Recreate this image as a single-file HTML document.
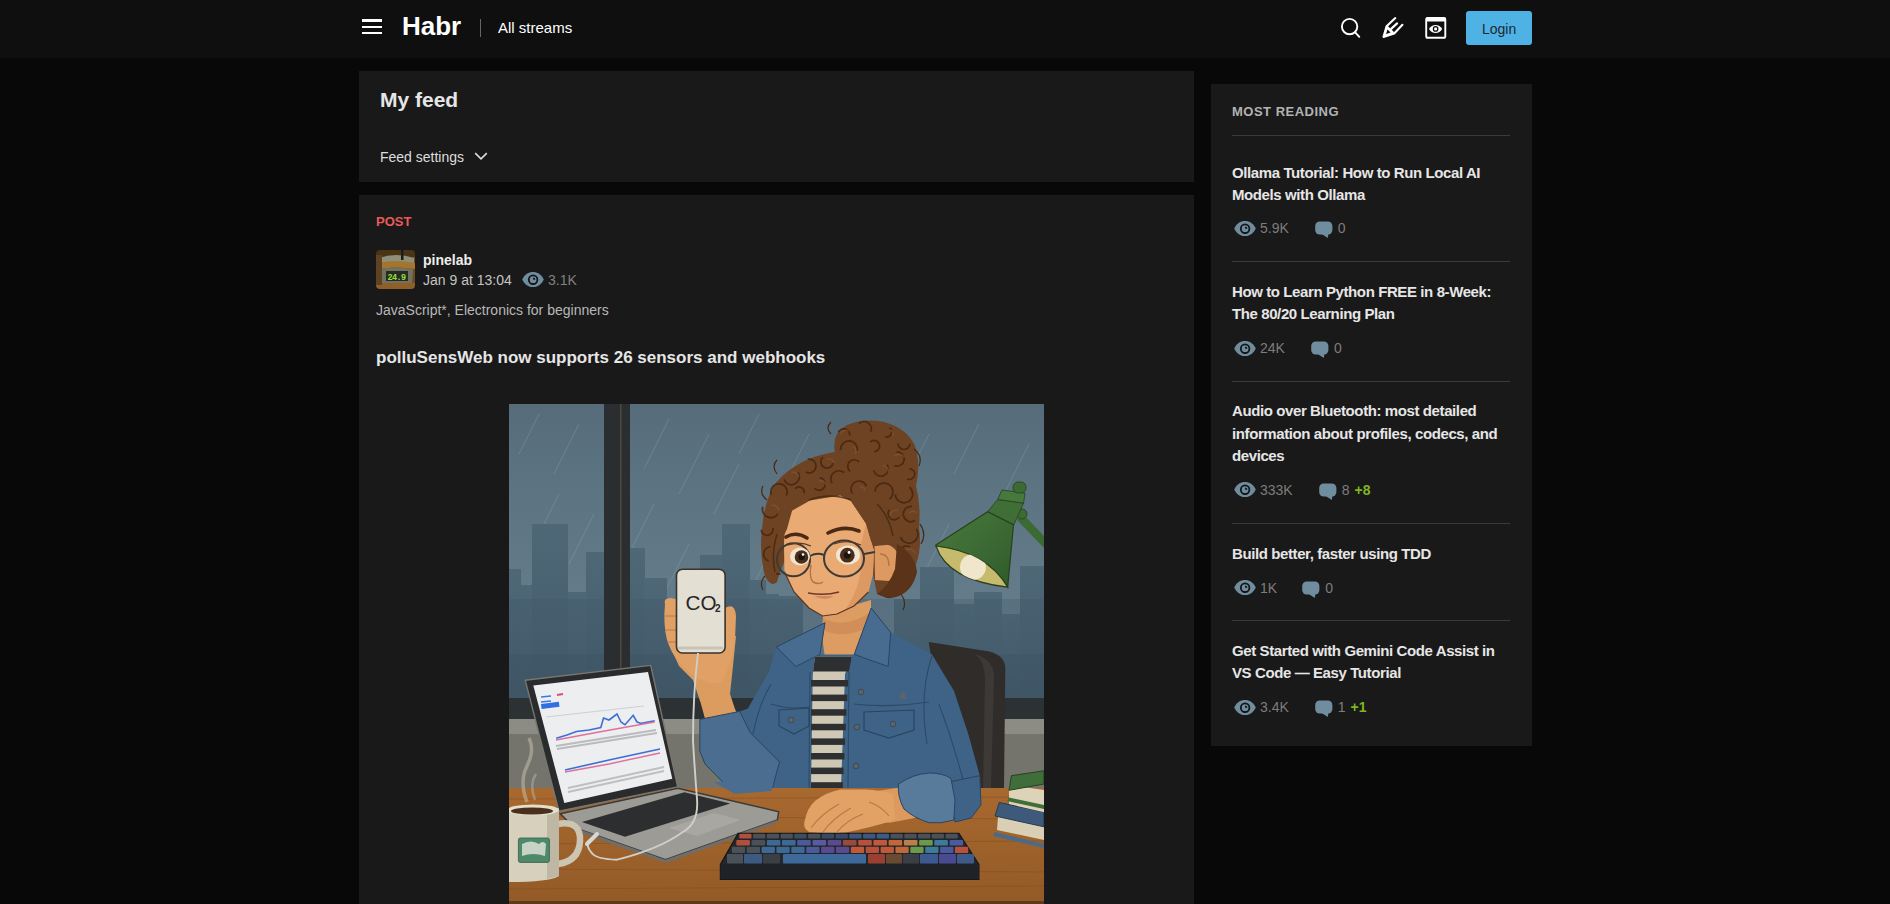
<!DOCTYPE html>
<html><head><meta charset="utf-8">
<style>
*{margin:0;padding:0;box-sizing:border-box}
html,body{width:1890px;height:904px;overflow:hidden;background:#080808;font-family:"Liberation Sans",sans-serif;color:#eee}
.abs{position:absolute}
#hdr{position:absolute;left:0;top:0;width:1890px;height:58px;background:#0f0f0f}
.card{position:absolute;background:#191919}
.t{position:absolute;white-space:nowrap;line-height:1}
.sbt{font-size:15px;font-weight:bold;line-height:22.5px;letter-spacing:-0.4px;color:#e6e6e6;white-space:nowrap}
.sbs{display:flex;align-items:center;height:14px;font-size:14px;line-height:14px;color:#7d7d7d;white-space:nowrap}
</style></head><body>
<div id="hdr">
  <div class="abs" style="left:362px;top:19px;width:20px;height:3px;background:#fff"></div>
  <div class="abs" style="left:362px;top:26px;width:20px;height:2px;background:#fff"></div>
  <div class="abs" style="left:362px;top:32px;width:20px;height:2px;background:#fff"></div>
  <div class="t" style="left:402px;top:13px;font-size:26px;font-weight:bold;color:#fff">Habr</div>
  <div class="abs" style="left:480px;top:19px;width:1px;height:18px;background:#666"></div>
  <div class="t" style="left:498px;top:20px;font-size:15px;color:#fff">All streams</div>

  <svg class="abs" style="left:1330px;top:8px" width="40" height="40" viewBox="1330 8 40 40">
    <circle cx="1349.6" cy="26.6" r="7.7" fill="none" stroke="#fff" stroke-width="1.9"/>
    <path d="M1355.2 32.3 L1359.3 36.8" stroke="#fff" stroke-width="1.9" stroke-linecap="round"/>
  </svg>
  <svg class="abs" style="left:1378px;top:12px" width="30" height="30" viewBox="0 0 30 30">
    <path d="M8.6 14.2 L5.5 24.9 L16.2 21.5 Z" fill="#fff"/>
    <path d="M9.4 17.6 L12.6 20.5 L8.1 21.9 Z" fill="#0f0f0f"/>
    <path d="M17.3 6.1 L8.6 14.2 L5.5 24.9 L16.2 21.5 L24.4 12.8" fill="none" stroke="#fff" stroke-width="2.1" stroke-linecap="round" stroke-linejoin="round"/>
    <path d="M8.8 14.6 L14.8 20.2 M13.4 16.6 L19.1 11.4" fill="none" stroke="#fff" stroke-width="2.1" stroke-linecap="round"/>
  </svg>
  <svg class="abs" style="left:1420px;top:12px" width="32" height="32" viewBox="1420 12 32 32">
    <rect x="1426.2" y="17.9" width="19.1" height="19.9" rx="1.6" fill="none" stroke="#fff" stroke-width="1.9"/>
    <rect x="1426" y="17.5" width="19.6" height="4" fill="#fff"/>
    <path d="M1429 28.9 C1432 23.6 1439.2 23.6 1442.2 28.9 C1439.2 34.2 1432 34.2 1429 28.9Z" fill="#fff"/>
    <circle cx="1435.6" cy="28.9" r="2.2" fill="none" stroke="#0f0f0f" stroke-width="1.3"/>
  </svg>
  <div class="abs" style="left:1466px;top:11px;width:66px;height:34px;background:#4fb2e5;border-radius:3px"></div>
  <div class="t" style="left:1482px;top:22px;font-size:14px;color:#1d2830">Login</div>
</div>

<div class="card" style="left:359px;top:71px;width:835px;height:111px"></div>
<div class="t" style="left:380px;top:89px;font-size:21px;font-weight:bold;color:#e6e6e6">My feed</div>
<div class="t" style="left:380px;top:150px;font-size:14px;color:#ddd">Feed settings</div>

<svg class="abs" style="left:474px;top:151px" width="14" height="10" viewBox="0 0 14 10"><path d="M1.2 2.2 L7 7.8 L12.8 2.2" fill="none" stroke="#ddd" stroke-width="1.6"/></svg>
<div class="card" style="left:359px;top:195px;width:835px;height:720px"></div>
<div class="t" style="left:376px;top:215px;font-size:13px;font-weight:bold;color:#e85a5a">POST</div>
<svg class="abs" style="left:376px;top:250px" width="39" height="39" viewBox="0 0 39 39"><defs><clipPath id="avc"><rect width="39" height="39" rx="4"/></clipPath><filter id="avb" x="-10%" y="-10%" width="120%" height="120%"><feGaussianBlur stdDeviation="0.7"/></filter></defs><g clip-path="url(#avc)"><g filter="url(#avb)">
<rect x="-2" y="-2" width="43" height="43" fill="#6e4c24"/>
<rect x="-2" y="-2" width="43" height="9" fill="#4a3519"/>
<path d="M3 8 Q20 2 38 8 L38 14 Q20 10 3 14Z" fill="#8d8f78"/>
<path d="M2 13 Q20 9 39 13 L39 19 Q20 16 2 19Z" fill="#a4742e"/>
<path d="M3 19 Q20 16 37 19 L36 34 Q20 38 4 34Z" fill="#6f725e"/>
<rect x="10" y="21" width="22" height="10" fill="#2c2c20"/>
<rect x="0" y="33" width="39" height="8" fill="#8f5e2a"/>
<rect x="0" y="5" width="6" height="30" fill="#5e4220"/>
<rect x="25" y="0" width="2.5" height="10" fill="#1c1c1c"/>
</g>
<text x="11.5" y="29.5" font-family="Liberation Mono" font-size="8.5" font-weight="bold" fill="#8fe03c" letter-spacing="-0.6">24.9</text>
</g></svg>
<div class="t" style="left:423px;top:253px;font-size:14px;font-weight:bold;color:#eee">pinelab</div>
<div class="t" style="left:423px;top:273px;font-size:14px;color:#c4c4c4">Jan 9 at 13:04</div>
<svg class="abs" style="left:521.5px;top:272px" width="22" height="15" viewBox="0 0 22 15"><path d="M0.2 7.6 C4.5 -2.6 17.5 -2.6 21.8 7.6 C17.5 17.8 4.5 17.8 0.2 7.6Z" fill="#6f8d9e"/><circle cx="11.1" cy="7.7" r="4.3" fill="none" stroke="#141414" stroke-width="1.8"/><path d="M11.1 7.7 L11.1 5.4 A2.3 2.3 0 0 1 13.4 7.7Z" fill="#141414"/></svg>
<div class="t" style="left:548px;top:273px;font-size:14px;color:#808080">3.1K</div>
<div class="t" style="left:376px;top:303px;font-size:14px;color:#b8b8b8">JavaScript*, Electronics for beginners</div>
<div class="t" style="left:376px;top:349px;font-size:17px;font-weight:bold;color:#e6e6e6">polluSensWeb now supports 26 sensors and webhooks</div>

<svg class="abs" style="left:509px;top:404px" width="535" height="500" viewBox="0 0 535 500">
<defs>
<linearGradient id="sky" x1="0" y1="0" x2="0" y2="1"><stop offset="0" stop-color="#566c7a"/><stop offset="0.5" stop-color="#617987"/><stop offset="1" stop-color="#6b8391"/></linearGradient>
<linearGradient id="desk" x1="0" y1="0" x2="0" y2="1"><stop offset="0" stop-color="#a8692f"/><stop offset="1" stop-color="#935a27"/></linearGradient>
<linearGradient id="bld" x1="0" y1="0" x2="0" y2="1"><stop offset="0" stop-color="#4f6878"/><stop offset="1" stop-color="#425a6a"/></linearGradient>
<linearGradient id="shade" x1="0" y1="0" x2="1" y2="1"><stop offset="0" stop-color="#4a7b3e"/><stop offset="1" stop-color="#2f5a2a"/></linearGradient>
</defs>
<rect width="535" height="300" fill="url(#sky)"/>
<g stroke="#8ea5b2" stroke-width="0.9" opacity="0.4">
<path d="M30 10 L10 50 M70 20 L45 70 M50 90 L25 140 M85 110 L60 160 M20 180 L5 210 M160 15 L135 65 M200 30 L170 90 M145 100 L120 150 M230 60 L205 110 M180 140 L155 190 M250 10 L230 50 M300 30 L275 80 M470 20 L445 70 M520 40 L495 90 M440 120 L415 170 M500 140 L480 180 M420 30 L400 70 M260 150 L240 190 M60 230 L40 270 M150 220 L130 260 M190 210 L170 250 M455 200 L435 240 M520 200 L500 240"/>
</g>
<g fill="url(#bld)">
<rect x="0" y="165" width="12" height="135"/>
<rect x="12" y="181" width="12" height="119"/>
<rect x="23" y="120" width="36" height="180"/>
<rect x="59" y="188" width="18" height="112"/>
<rect x="77" y="148" width="18" height="152"/>
<rect x="121" y="144" width="15" height="156"/>
<rect x="135" y="174" width="23" height="126"/>
<rect x="158" y="195" width="33" height="105"/>
<rect x="191" y="151" width="22" height="149"/>
<rect x="213" y="120" width="28" height="180"/>
<rect x="240" y="176" width="17" height="124"/>
<rect x="257" y="190" width="13" height="110"/>
<rect x="270" y="192" width="24" height="108"/>
<rect x="385" y="195" width="27" height="105"/>
<rect x="411" y="163" width="34" height="137"/>
<rect x="444" y="200" width="21" height="100"/>
<rect x="465" y="188" width="28" height="112"/>
<rect x="493" y="210" width="18" height="90"/>
<rect x="511" y="162" width="24" height="138"/>
</g>
<rect x="0" y="195" width="535" height="105" fill="#3f5666" opacity="0.3"/><rect x="0" y="250" width="535" height="50" fill="#3a5060" opacity="0.3"/>
<!-- window frame -->
<rect x="95" y="0" width="26" height="300" fill="#2b2e30"/>
<rect x="111" y="0" width="1.5" height="300" fill="#4d4838"/>
<rect x="0" y="294" width="535" height="21" fill="#2c3134"/>
<rect x="0" y="315" width="535" height="69" fill="#74736c"/>
<rect x="0" y="315" width="535" height="15" fill="#8c8b84"/>
<!-- chair -->
<path d="M419.7 238 L480.5 247.6 Q497 252 496.3 266 L495 384 L440 384 L430 300 Z" fill="#2f2c2a"/>
<path d="M466 250 Q486 256 485 275 L482 384 L474 384 L476 275 Q476 258 466 250Z" fill="#3c3936"/>
<!-- hair back mass -->
<path d="M256 172 Q250 150 253 125 Q255 98 266 80 Q280 62 305 53 Q318 49 326 48 Q322 30 338 21 Q355 14 375 18 Q398 24 406 42 Q412 60 407 82 Q412 100 410 124 Q413 145 407 160 Q400 180 392 188 Q380 196 368 190 L360 150 L300 140 L280 150 Q272 162 268 178 Q262 184 256 172Z" fill="#6d4324"/>
<path d="M329.3 28.4 A6.0 6.0 0 0 1 340.7 31.6 M349.8 19.7 A7.4 7.4 0 0 1 361.9 27.6 M380.6 23.7 A5.1 5.1 0 0 1 376.1 32.7 M400.9 39.8 A5.9 5.9 0 1 1 389.1 39.4 M331.7 46.2 A8.3 8.3 0 1 1 348.1 46.8 M361.3 37.8 A5.6 5.6 0 1 1 365.2 47.6 M387.6 47.9 A7.1 7.1 0 1 1 385.5 61.6 M400.3 64.8 A5.3 5.3 0 1 1 398.2 74.9 M324.1 59.2 A6.2 6.2 0 1 1 314.0 53.2 M298.7 55.2 A6.9 6.9 0 1 1 296.7 68.0 M288.9 68.3 A7.9 7.9 0 1 1 275.0 75.5 M262.3 90.8 A8.2 8.2 0 1 1 277.4 91.5 M269.0 109.9 A8.5 8.5 0 0 1 253.8 102.7 M263.7 123.7 A5.9 5.9 0 1 1 252.2 125.8 M259.6 157.1 A7.5 7.5 0 1 1 265.6 143.4 M341.1 67.3 A6.5 6.5 0 1 1 350.2 58.1 M378.0 60.8 A7.3 7.3 0 1 1 364.8 66.3 M400.4 83.2 A8.7 8.7 0 1 1 386.3 90.4 M406.0 116.6 A7.7 7.7 0 1 1 403.0 102.4 M407.3 125.0 A8.9 8.9 0 1 1 391.6 132.9 M399.9 157.6 A7.9 7.9 0 1 1 401.0 142.7 M388.4 177.1 A7.3 7.3 0 0 1 388.4 162.9 M388.4 184.5 A8.4 8.4 0 0 1 372.5 188.8 M323.1 79.4 A8.2 8.2 0 0 1 335.3 68.7 M310.7 73.9 A6.2 6.2 0 1 1 305.5 84.2 M286.1 84.6 A5.2 5.2 0 0 1 295.0 89.3 M346.2 91.9 A7.9 7.9 0 1 1 357.4 82.3 M366.1 87.7 A8.9 8.9 0 1 1 380.5 95.0 M390.5 112.9 A6.2 6.2 0 1 1 380.6 105.5 M271.7 169.8 A5.1 5.1 0 1 1 268.6 160.1" fill="none" stroke="#46250e" stroke-width="1.7" opacity="0.85"/>
<path d="M331.5 30.1 A5.8 5.8 0 0 1 339.8 26.9 M381.0 26.0 A4.1 4.1 0 0 1 383.8 31.7 M344.1 42.5 A4.9 4.9 0 0 1 346.0 49.8 M385.3 52.2 A6.7 6.7 0 0 1 395.5 53.2 M317.5 55.2 A5.4 5.4 0 0 1 325.1 58.4 M282.1 68.4 A5.9 5.9 0 0 1 289.9 73.1 M262.5 101.5 A5.7 5.7 0 0 1 269.7 106.4 M260.7 146.0 A6.8 6.8 0 0 1 270.4 149.8 M373.7 61.7 A5.3 5.3 0 0 1 379.3 67.6 M400.2 109.2 A4.7 4.7 0 0 1 407.4 108.7 M396.8 145.8 A6.9 6.9 0 0 1 406.6 149.9 M376.4 186.9 A5.6 5.6 0 0 1 383.1 181.5 M310.2 77.1 A5.2 5.2 0 0 1 317.2 81.1 M350.9 83.1 A4.1 4.1 0 0 1 356.0 86.6 M381.2 111.3 A5.9 5.9 0 0 1 388.7 106.4" fill="none" stroke="#8f5a32" stroke-width="1.3" opacity="0.6"/>
<path d="M322 30 Q316 24 322 18 M258 96 Q250 90 254 82 M405 45 Q414 52 410 62 M411 120 Q418 130 412 140 M256 172 Q250 178 254 186 M392 190 Q398 198 394 206 M268 70 Q262 62 268 56" fill="none" stroke="#4a2810" stroke-width="1.2"/>
<!-- neck -->
<path d="M314 210 L362 196 L362 226 L347 254 L316 254 L313 232 Z" fill="#dc9c62"/>
<path d="M314 214 Q335 226 362 208 L362 222 Q335 236 314 226Z" fill="#c98652" opacity="0.6"/>
<!-- jacket body -->
<path d="M316 218.7 L292 232 L267.3 243 L259.9 267.6 L238.7 304.8 L230.7 307.4 L190.9 315.4 L190.9 347.3 L225.4 389.8 L262.6 387.1 L262 384 L419.7 384 L419.7 391 L424.5 408.2 L419.7 420.4 L456.2 418 L472 400.9 L470.8 371.7 L459.5 330.7 L445 287 L423 250.4 L381.7 228.5 L362.2 204 L345.2 250.4 L311 250.4 Z" fill="#3f6386"/>
<g fill="none" stroke="#2a4560" stroke-width="1.1" opacity="0.85">
<path d="M262 300 Q280 306 300 303 M345 300 Q380 304 420 298 M301 268 L300 384 M340 268 L339 384 M430 300 Q445 340 455 380 M241 330 Q255 360 262 387 M262 280 Q250 300 244 330 M423 252 Q410 290 418 340"/>
</g>
<!-- collar -->
<path d="M316 218.7 L267.3 243 L286.8 262.5 L311 250.4 Z" fill="#476c90" stroke="#2a4560" stroke-width="1"/>
<path d="M362.2 204 L381.7 228.5 L379.2 262.5 L345.2 250.4 Z" fill="#476c90" stroke="#2a4560" stroke-width="1"/>
<!-- pockets -->
<path d="M270 306 L300 304 L300 322 L285 330 L270 322Z" fill="none" stroke="#2a4560" stroke-width="1.2"/>
<path d="M355 308 L405 306 L405 326 L380 334 L355 326Z" fill="none" stroke="#2a4560" stroke-width="1.2"/>
<g fill="#5d6468" stroke="#2a3a48" stroke-width="0.6"><circle cx="282" cy="316" r="2.8"/><circle cx="384" cy="320" r="2.8"/><circle cx="352" cy="288" r="2.8"/><circle cx="348" cy="323" r="2.8"/><circle cx="347" cy="362" r="2.8"/></g>
<path d="M390 295 L394 286 L398 295Z" fill="#5d6468"/>
<!-- shirt -->
<path d="M306 252.8 L342.7 252.8 L336 270 L332 384 L302 384 L303.8 270 Z" fill="#cfc8b5"/>
<g fill="#2e2f31">
<path d="M306 252.8 L342.7 252.8 L340 267.4 L304 267.4Z"/>
<rect x="302" y="276" width="37.0" height="6.5"/>
<rect x="302" y="290.6" width="36.3" height="6.5"/>
<rect x="302" y="305.2" width="35.5" height="6.5"/>
<rect x="302" y="319.8" width="34.8" height="6.5"/>
<rect x="302" y="334.4" width="34.1" height="6.5"/>
<rect x="302" y="349" width="33.4" height="6.5"/>
<rect x="302" y="363.6" width="32.6" height="6.5"/>
<rect x="302" y="378.2" width="31.9" height="5.8"/>
</g>
<!-- raised forearm -->
<path d="M160 240 L227 232 L224 262 L221 290 L226 305 L232 318 L201.5 335 L192 300 L184 276 L170 262 Z" fill="#dc9b5f"/>
<!-- sleeve cuff left -->
<path d="M190.9 315.4 L230.7 307.4 L241.3 328.7 L270.5 357.9 L262.6 387.1 L225.4 389.8 L196 360 L190.9 347.3 Z" fill="#4b6e90" stroke="#2a4560" stroke-width="1"/>
<!-- hand holding device -->
<path d="M156 200 Q154 194 162 194 L170 196 L170 250 L216 250 L216 204 Q226 198 227 212 L226 236 Q222 262 213 278 Q200 282 185 272 Q165 258 158 236 Q154 220 156 200Z" fill="#e0a066"/>
<g stroke="#a86a3a" stroke-width="1" fill="none" opacity="0.7"><path d="M156 212 L168 212 M156 226 L168 226 M158 238 L168 238"/></g>
<!-- device -->
<rect x="167.5" y="165.3" width="48.6" height="83.7" rx="6" fill="#e3dfd3" stroke="#3a332a" stroke-width="1.6"/>
<path d="M169 244 L214 244" stroke="#c9c4b6" stroke-width="3"/>
<text x="176.5" y="205.5" font-family="Liberation Sans" font-size="20" fill="#262626" textLength="31" lengthAdjust="spacingAndGlyphs">CO</text>
<text x="206" y="208" font-family="Liberation Sans" font-size="10" font-weight="bold" fill="#262626">2</text>
<!-- face -->
<path d="M276 120 L283 106.7 L301 96.5 L331.4 91.4 L341.6 96.5 L357 119.4 L362 137 L365 146.5 L364 170 L359.4 188 L345 202 L328 210 L313.6 212 L300 204 L285 188 L275.4 167.8 L275 140 Z" fill="#eaaa74"/>
<path d="M357 119.4 L362 137 L365 146.5 L364 170 L359.4 188 L345 202 L335 207 Q356 180 352 140Z" fill="#d8935e" opacity="0.75"/>
<path d="M275.4 167.8 L285 188 L300 204 L313.6 212 L328 210 L345 202 L359.4 188" fill="none" stroke="#5a3520" stroke-width="1.2"/>
<!-- ear -->
<path d="M365.5 142 Q380 136 388 148 Q392 165 380 177 L366 176 Z" fill="#dc9a62"/>
<path d="M371 150 Q380 150 380 162" stroke="#b97444" stroke-width="1.5" fill="none"/>
<!-- hair front details -->
<path d="M362 137 L357 119.4 L341.6 96.5 L331.4 91.4 Q350 86 368 96 Q382 112 388 140 L366 142 Z" fill="#6d4324"/>
<path d="M283 106.7 Q266 118 262 140 Q258 160 262 176 Q270 170 270 155 Q272 135 278 125 Z" fill="#6d4324"/>
<path d="M388 140 Q406 150 408 168 Q404 186 390 192 Q380 196 368 190 Q380 182 386 165 Z" fill="#5a3318"/>
<path d="M300 96 Q320 88 342 96 M368 100 Q380 112 384 132 M268 130 Q262 150 266 168" fill="none" stroke="#46250e" stroke-width="1.5" opacity="0.8"/>
<!-- glasses -->
<g fill="none" stroke="#3d3a36" stroke-width="2">
<ellipse cx="284.5" cy="155.8" rx="16.5" ry="16.5"/>
<ellipse cx="335" cy="154.5" rx="20" ry="18"/>
<path d="M301 152 Q308 148 315 151 M355 150 L366 148"/>
</g>
<!-- eyes -->
<ellipse cx="291" cy="152.5" rx="10" ry="9" fill="#f1e6d2"/>
<ellipse cx="339" cy="151" rx="12" ry="9.5" fill="#f1e6d2"/>
<circle cx="292.5" cy="153" r="6.8" fill="#4a2e1c"/>
<circle cx="338.3" cy="151.2" r="7.4" fill="#4a2e1c"/>
<circle cx="292.5" cy="153" r="3.2" fill="#1e130c"/>
<circle cx="338.3" cy="151.2" r="3.4" fill="#1e130c"/>
<circle cx="294" cy="150.5" r="1.3" fill="#fff"/><circle cx="340" cy="148.5" r="1.4" fill="#fff"/>
<path d="M279 141 Q291 137 302 142 M325 140 Q339 135 352 141" stroke="#5a3a26" stroke-width="1.2" fill="none"/>
<path d="M277 133 Q287 127 298 134 M319 129 Q335 121 350 127" stroke="#4a2a14" stroke-width="3.6" fill="none" stroke-linecap="round"/>
<path d="M302 161 Q300 174 304 178 Q310 181 314 178" stroke="#b87444" stroke-width="1.4" fill="none"/>
<path d="M299 189 Q316 192 330 188" stroke="#6e3a28" stroke-width="1.6" fill="none"/>
<path d="M305 192 Q316 198 325 192" fill="#c97a5a" opacity="0.7"/>
<!-- lamp -->
<path d="M512 108 L535 132 L535 144 L508 116Z" fill="#3b6a33"/>
<circle cx="513" cy="110" r="5" fill="#3b6a33" stroke="#28401f" stroke-width="0.8"/>
<path d="M478.6 107.7 L488.7 95.5 L514.6 99.1 L504.5 121.4 Z" fill="#3f6f36" stroke="#28401f" stroke-width="0.8"/>
<path d="M493 86 L516 89 L514.6 99.1 L488.7 95.5 Z" fill="#46793b" stroke="#28401f" stroke-width="0.8"/>
<rect x="504" y="78" width="13" height="11" rx="5" fill="#3b6a33" stroke="#28401f" stroke-width="0.8"/>
<defs><clipPath id="lampc"><path d="M427 142 Q438 176 498.7 183.2 Q478 148 427 142Z"/></clipPath></defs>
<path d="M426.8 141 L478.6 107.7 L504.5 120.7 L498.7 183.2 Q478 148 427 142Z" fill="url(#shade)" stroke="#28401f" stroke-width="1.2"/>
<path d="M427 142 Q438 176 498.7 183.2 Q478 148 427 142Z" fill="#c6ba6c" stroke="#28401f" stroke-width="1.2"/>
<g clip-path="url(#lampc)"><circle cx="464" cy="163" r="13" fill="#efe6cc"/></g>
<!-- desk -->
<rect x="0" y="384" width="535" height="116" fill="url(#desk)"/>
<g stroke="#7e4a1f" stroke-width="1" opacity="0.45"><path d="M0 395 L535 393 M0 412 L535 415 M0 440 L535 437 M0 465 L535 468 M0 485 L535 482"/></g>
<rect x="0" y="497" width="535" height="3" fill="#5e391a"/>
<!-- sleeves below desk line -->
<path d="M430 380 L470.8 371.7 L472 400.9 L462 414 L446 418 L440 384Z" fill="#3f6386" stroke="#2a4560" stroke-width="1"/>
<path d="M205 378 L225.4 389.8 L262.6 387.1 L264 378Z" fill="#4b6e90"/>
<!-- laptop base -->
<path d="M51.3 409.8 L168.7 384.2 L269.7 407.7 L268.3 416 L156.5 455.7 L64.8 423.3 Z" fill="#9c9b96" stroke="#3a3a38" stroke-width="1.4"/>
<path d="M64.8 423.3 L156.5 455.7 L268.3 416 L268 419 L157 459 L63 426Z" fill="#6f6e6a"/>
<path d="M72.9 418 L175.4 388.3 L221.3 399.4 L116 432.8 Z" fill="#2d2e30"/>
<path d="M160 424 L205 409 L232 416 L188 432Z" fill="#a8a7a2"/>
<!-- laptop screen -->
<path d="M16.2 276.2 L141.7 261.4 L168.7 382.9 L49.9 407.1 Z" fill="#2a2b2d" stroke="#77766f" stroke-width="1.4" stroke-linejoin="round"/>
<path d="M24.3 281.6 L139 268.1 L163.3 374.8 L55.3 399 Z" fill="#eceef0"/>
<path d="M32 293 L42 292 M32 298 L42 297" stroke="#3a7ae0" stroke-width="1.5"/>
<path d="M48 291 L54 290" stroke="#e04a80" stroke-width="2"/>
<rect x="32" y="300" width="18" height="5" fill="#2f6fe0" transform="rotate(-7 32 300)"/>
<path d="M37 313 L135 302" stroke="#c8c8c8" stroke-width="0.8"/>
<path d="M47.2 334.3 L58 331 L67.5 327.5 L80 326 L91.8 323.5 L94.5 314 L100 316 L108 310 L112 318 L116 320.8 L124.2 311.3 L128 318 L132.3 319.4 L145.7 316.7" stroke="#3c6fd6" stroke-width="1.6" fill="none"/>
<path d="M47 336 L90 328 L145.7 318" stroke="#e0709a" stroke-width="1.3" fill="none"/>
<path d="M47 342 L147 326 M48 345 L148 329" stroke="#9a9a9a" stroke-width="2" opacity="0.6"/>
<path d="M56 366 L100 356 L151 345" stroke="#3c6fd6" stroke-width="1.6" fill="none"/>
<path d="M56 368 L100 360 L151 349" stroke="#e0709a" stroke-width="1.3" fill="none"/>
<path d="M59 388 L155 367 M59 384 L155 363" stroke="#9a9a9a" stroke-width="1.8" opacity="0.55"/>
<!-- cable -->
<path d="M189 249 Q184 290 184 337 Q186 370 188 395 Q190 420 172.7 428.7 Q150 445 108 455.7 Q88 455 83.7 450 Q76 442 80 436" stroke="#cfcfc8" stroke-width="1.9" fill="none"/>
<path d="M78 440 L88 430" stroke="#d8d8d2" stroke-width="4" stroke-linecap="round"/>
<!-- mug -->
<path d="M49 420 Q72 416 71 437 Q70 457 49 460" stroke="#cbc5b1" stroke-width="6.5" fill="none"/>
<path d="M0 404 L50 404 L50 472 Q40 478 0 478 Z" fill="#d6d0bc"/>
<path d="M38 404 L50 404 L50 472 L38 475Z" fill="#bdb7a3"/>
<ellipse cx="24" cy="406" rx="26" ry="5.5" fill="#e4dfcc"/>
<ellipse cx="23" cy="407" rx="21" ry="3.6" fill="#4a2f1e"/>
<rect x="9.4" y="434" width="31" height="24.4" rx="2" fill="#4d8a6c" stroke="#3a5a48" stroke-width="0.8"/>
<path d="M13 440 Q22 435 30 440 Q34 436 37 440 L36 452 Q24 448 13 452 Z" fill="#c8d3c6"/>
<path d="M18 398 Q10 378 18 362 Q26 346 20 334" stroke="#c9c3b2" stroke-width="3.5" fill="none" opacity="0.5"/>
<path d="M26 396 Q20 380 27 370" stroke="#c9c3b2" stroke-width="2.5" fill="none" opacity="0.4"/>
<!-- right forearm -->
<path d="M348 390 L378 385.5 L395 382.8 L422.7 393.8 L424 410.4 L381 418.7 L348 416 Z" fill="#dc9a5e"/>
<!-- right hand -->
<path d="M295.4 418 Q298 404 306.5 396.6 Q318 388 331.4 385.5 L356.3 385.5 Q372 386 384 390 L386 416 Q360 424 337 428.4 Q316 430 300 428 Q294 424 295.4 418Z" fill="#e2a266"/>
<g stroke="#a86a3a" stroke-width="1.1" fill="none" opacity="0.75"><path d="M302 424 Q312 410 330 400 M314 428 Q324 414 342 404 M328 428 Q338 416 354 410 M360 398 Q372 402 380 412"/></g>
<!-- sleeve cuff right -->
<path d="M389.5 380 Q404 370 420 369 Q434 369 442 374.5 L446 396 L444.8 416 Q432 420 420 418.7 Q405 414 395 405 Q388 392 389.5 380Z" fill="#587b9b" stroke="#2a4560" stroke-width="1"/>
<!-- keyboard -->
<path d="M229.1 429.3 L449.9 429.3 L469.9 460.4 L469.9 475.3 L211.4 475.3 L211.4 460.4 Z" fill="#23272b" stroke="#14171a" stroke-width="1.2"/>
<path d="M211.4 460.4 L469.9 460.4 L469.9 475.3 L211.4 475.3 Z" fill="#1f2327"/>
<g>
<rect x="230.3" y="429.8" width="12.2" height="4.8" rx="1" fill="#b0503c"/>
<rect x="244.1" y="429.8" width="12.2" height="4.8" rx="1" fill="#4a5158"/>
<rect x="257.8" y="429.8" width="12.2" height="4.8" rx="1" fill="#4a5158"/>
<rect x="271.6" y="429.8" width="12.2" height="4.8" rx="1" fill="#4a5158"/>
<rect x="285.3" y="429.8" width="12.2" height="4.8" rx="1" fill="#3c4e60"/>
<rect x="299.1" y="429.8" width="12.2" height="4.8" rx="1" fill="#4a5158"/>
<rect x="312.8" y="429.8" width="12.2" height="4.8" rx="1" fill="#3a4a66"/>
<rect x="326.6" y="429.8" width="12.2" height="4.8" rx="1" fill="#3a4a66"/>
<rect x="340.3" y="429.8" width="12.2" height="4.8" rx="1" fill="#3e5680"/>
<rect x="354.1" y="429.8" width="12.2" height="4.8" rx="1" fill="#3e5680"/>
<rect x="367.8" y="429.8" width="12.2" height="4.8" rx="1" fill="#3e5a88"/>
<rect x="381.6" y="429.8" width="12.2" height="4.8" rx="1" fill="#4a5158"/>
<rect x="395.3" y="429.8" width="12.2" height="4.8" rx="1" fill="#4a5158"/>
<rect x="409.1" y="429.8" width="12.2" height="4.8" rx="1" fill="#4a5158"/>
<rect x="422.8" y="429.8" width="12.2" height="4.8" rx="1" fill="#4a5158"/>
<rect x="436.6" y="429.8" width="12.2" height="4.8" rx="1" fill="#4a5158"/>
<rect x="227.3" y="436.0" width="13.6" height="5.6" rx="1" fill="#b0503c"/>
<rect x="242.5" y="436.0" width="13.6" height="5.6" rx="1" fill="#4a5158"/>
<rect x="257.8" y="436.0" width="13.6" height="5.6" rx="1" fill="#3d6a94"/>
<rect x="273.0" y="436.0" width="13.6" height="5.6" rx="1" fill="#3d6a94"/>
<rect x="288.2" y="436.0" width="13.6" height="5.6" rx="1" fill="#4a5a9a"/>
<rect x="303.5" y="436.0" width="13.6" height="5.6" rx="1" fill="#5a5aa0"/>
<rect x="318.7" y="436.0" width="13.6" height="5.6" rx="1" fill="#5a4a90"/>
<rect x="333.9" y="436.0" width="13.6" height="5.6" rx="1" fill="#9a4a3a"/>
<rect x="349.2" y="436.0" width="13.6" height="5.6" rx="1" fill="#b8503c"/>
<rect x="364.4" y="436.0" width="13.6" height="5.6" rx="1" fill="#c0583a"/>
<rect x="379.6" y="436.0" width="13.6" height="5.6" rx="1" fill="#c0683a"/>
<rect x="394.9" y="436.0" width="13.6" height="5.6" rx="1" fill="#b8804a"/>
<rect x="410.1" y="436.0" width="13.6" height="5.6" rx="1" fill="#6a9a4a"/>
<rect x="425.3" y="436.0" width="13.6" height="5.6" rx="1" fill="#3e7a9a"/>
<rect x="440.6" y="436.0" width="13.6" height="5.6" rx="1" fill="#4a5aa0"/>
<rect x="222.8" y="442.7" width="13.3" height="6.4" rx="1" fill="#4a5158"/>
<rect x="237.7" y="442.7" width="13.3" height="6.4" rx="1" fill="#4a5158"/>
<rect x="252.6" y="442.7" width="13.3" height="6.4" rx="1" fill="#3d6a94"/>
<rect x="267.4" y="442.7" width="13.3" height="6.4" rx="1" fill="#3d6a94"/>
<rect x="282.3" y="442.7" width="13.3" height="6.4" rx="1" fill="#3d6a94"/>
<rect x="297.2" y="442.7" width="13.3" height="6.4" rx="1" fill="#4a5a9a"/>
<rect x="312.1" y="442.7" width="13.3" height="6.4" rx="1" fill="#5a4a90"/>
<rect x="326.9" y="442.7" width="13.3" height="6.4" rx="1" fill="#5a4a90"/>
<rect x="341.8" y="442.7" width="13.3" height="6.4" rx="1" fill="#c0583a"/>
<rect x="356.7" y="442.7" width="13.3" height="6.4" rx="1" fill="#b8503c"/>
<rect x="371.6" y="442.7" width="13.3" height="6.4" rx="1" fill="#c0583a"/>
<rect x="386.4" y="442.7" width="13.3" height="6.4" rx="1" fill="#c0683a"/>
<rect x="401.3" y="442.7" width="13.3" height="6.4" rx="1" fill="#6a9a4a"/>
<rect x="416.2" y="442.7" width="13.3" height="6.4" rx="1" fill="#3e7a9a"/>
<rect x="431.1" y="442.7" width="13.3" height="6.4" rx="1" fill="#4a5aa0"/>
<rect x="445.9" y="442.7" width="13.3" height="6.4" rx="1" fill="#b8503c"/>
<rect x="218" y="450" width="16" height="9.5" rx="1" fill="#4a5158"/>
<rect x="235" y="450" width="18" height="9.5" rx="1" fill="#3d5a80"/>
<rect x="254" y="450" width="17" height="9.5" rx="1" fill="#3a3f45"/>
<rect x="274" y="450" width="83" height="9.5" rx="1" fill="#3d6a9a"/>
<rect x="359" y="450" width="17" height="9.5" rx="1" fill="#9a4030"/>
<rect x="377" y="450" width="16" height="9.5" rx="1" fill="#6a4a30"/>
<rect x="394" y="450" width="16" height="9.5" rx="1" fill="#3a3f45"/>
<rect x="411" y="450" width="18" height="9.5" rx="1" fill="#3d5a90"/>
<rect x="430" y="450" width="17" height="9.5" rx="1" fill="#4a4a90"/>
<rect x="448" y="450" width="17" height="9.5" rx="1" fill="#3d5a88"/>
</g>
<!-- books -->
<path d="M490 400 L535 410.6 L535 436 L488 426Z" fill="#d9cfb4"/>
<path d="M490.2 398.5 L535 408 L535 422.8 L486 412 Z" fill="#3e5a7a" stroke="#263a50" stroke-width="1"/>
<path d="M486 428 L535 440 L535 444 L484 432Z" fill="#4a6a8a"/>
<path d="M500 381 L535 386 L535 408.2 L500 400Z" fill="#ddd3b8"/>
<path d="M502.4 371.7 L535 366.8 L535 380 L500 386.3Z" fill="#3f6e3a" stroke="#28401f" stroke-width="1"/>
<path d="M500 393.6 L535 401 L535 405 L498 397Z" fill="#3f6e3a"/>
</svg>

<div class="card" style="left:1211px;top:84px;width:321px;height:662px"></div>
<div class="t" style="left:1232px;top:105px;font-size:13px;font-weight:bold;letter-spacing:0.5px;color:#b3b3b3">MOST READING</div>
<div class="abs" style="left:1232px;top:135px;width:278px;height:1px;background:#3b3b3b"></div>
<div class="abs" style="left:1232px;top:261px;width:278px;height:1px;background:#3b3b3b"></div>
<div class="abs" style="left:1232px;top:381px;width:278px;height:1px;background:#3b3b3b"></div>
<div class="abs" style="left:1232px;top:523px;width:278px;height:1px;background:#3b3b3b"></div>
<div class="abs" style="left:1232px;top:620px;width:278px;height:1px;background:#3b3b3b"></div>
<div class="abs sbt" style="left:1232px;top:161.6px">Ollama Tutorial: How to Run Local AI<br>Models with Ollama</div>
<div class="abs sbs" style="left:1234px;top:221.0px"><svg width="22" height="15" viewBox="0 0 22 15" style="flex:none"><path d="M0.2 7.6 C4.5 -2.6 17.5 -2.6 21.8 7.6 C17.5 17.8 4.5 17.8 0.2 7.6Z" fill="#6f8d9e"/><circle cx="11.1" cy="7.7" r="4.3" fill="none" stroke="#141414" stroke-width="1.8"/><path d="M11.1 7.7 L11.1 5.4 A2.3 2.3 0 0 1 13.4 7.7Z" fill="#141414"/></svg><span style="margin-left:4px">5.9K</span><span style="margin-left:26px;display:flex"><svg width="18" height="17" viewBox="0 0 18 17" style="flex:none;position:relative;top:1.5px"><rect x="0.2" y="0.5" width="17.2" height="13" rx="4.5" fill="#6f8d9e"/><path d="M6 12.5 L13.5 12.5 L12.8 17 Z" fill="#6f8d9e"/></svg></span><span style="margin-left:5px">0</span></div>
<div class="abs sbt" style="left:1232px;top:280.7px">How to Learn Python FREE in 8-Week:<br>The 80/20 Learning Plan</div>
<div class="abs sbs" style="left:1234px;top:341.4px"><svg width="22" height="15" viewBox="0 0 22 15" style="flex:none"><path d="M0.2 7.6 C4.5 -2.6 17.5 -2.6 21.8 7.6 C17.5 17.8 4.5 17.8 0.2 7.6Z" fill="#6f8d9e"/><circle cx="11.1" cy="7.7" r="4.3" fill="none" stroke="#141414" stroke-width="1.8"/><path d="M11.1 7.7 L11.1 5.4 A2.3 2.3 0 0 1 13.4 7.7Z" fill="#141414"/></svg><span style="margin-left:4px">24K</span><span style="margin-left:26px;display:flex"><svg width="18" height="17" viewBox="0 0 18 17" style="flex:none;position:relative;top:1.5px"><rect x="0.2" y="0.5" width="17.2" height="13" rx="4.5" fill="#6f8d9e"/><path d="M6 12.5 L13.5 12.5 L12.8 17 Z" fill="#6f8d9e"/></svg></span><span style="margin-left:5px">0</span></div>
<div class="abs sbt" style="left:1232px;top:400.2px">Audio over Bluetooth: most detailed<br>information about profiles, codecs, and<br>devices</div>
<div class="abs sbs" style="left:1234px;top:482.9px"><svg width="22" height="15" viewBox="0 0 22 15" style="flex:none"><path d="M0.2 7.6 C4.5 -2.6 17.5 -2.6 21.8 7.6 C17.5 17.8 4.5 17.8 0.2 7.6Z" fill="#6f8d9e"/><circle cx="11.1" cy="7.7" r="4.3" fill="none" stroke="#141414" stroke-width="1.8"/><path d="M11.1 7.7 L11.1 5.4 A2.3 2.3 0 0 1 13.4 7.7Z" fill="#141414"/></svg><span style="margin-left:4px">333K</span><span style="margin-left:26px;display:flex"><svg width="18" height="17" viewBox="0 0 18 17" style="flex:none;position:relative;top:1.5px"><rect x="0.2" y="0.5" width="17.2" height="13" rx="4.5" fill="#6f8d9e"/><path d="M6 12.5 L13.5 12.5 L12.8 17 Z" fill="#6f8d9e"/></svg></span><span style="margin-left:5px">8</span><span style="margin-left:5px;color:#7fb522;font-weight:bold">+8</span></div>
<div class="abs sbt" style="left:1232px;top:542.8px">Build better, faster using TDD</div>
<div class="abs sbs" style="left:1234px;top:580.5px"><svg width="22" height="15" viewBox="0 0 22 15" style="flex:none"><path d="M0.2 7.6 C4.5 -2.6 17.5 -2.6 21.8 7.6 C17.5 17.8 4.5 17.8 0.2 7.6Z" fill="#6f8d9e"/><circle cx="11.1" cy="7.7" r="4.3" fill="none" stroke="#141414" stroke-width="1.8"/><path d="M11.1 7.7 L11.1 5.4 A2.3 2.3 0 0 1 13.4 7.7Z" fill="#141414"/></svg><span style="margin-left:4px">1K</span><span style="margin-left:25px;display:flex"><svg width="18" height="17" viewBox="0 0 18 17" style="flex:none;position:relative;top:1.5px"><rect x="0.2" y="0.5" width="17.2" height="13" rx="4.5" fill="#6f8d9e"/><path d="M6 12.5 L13.5 12.5 L12.8 17 Z" fill="#6f8d9e"/></svg></span><span style="margin-left:5px">0</span></div>
<div class="abs sbt" style="left:1232px;top:639.6px">Get Started with Gemini Code Assist in<br>VS Code — Easy Tutorial</div>
<div class="abs sbs" style="left:1234px;top:700.0px"><svg width="22" height="15" viewBox="0 0 22 15" style="flex:none"><path d="M0.2 7.6 C4.5 -2.6 17.5 -2.6 21.8 7.6 C17.5 17.8 4.5 17.8 0.2 7.6Z" fill="#6f8d9e"/><circle cx="11.1" cy="7.7" r="4.3" fill="none" stroke="#141414" stroke-width="1.8"/><path d="M11.1 7.7 L11.1 5.4 A2.3 2.3 0 0 1 13.4 7.7Z" fill="#141414"/></svg><span style="margin-left:4px">3.4K</span><span style="margin-left:26px;display:flex"><svg width="18" height="17" viewBox="0 0 18 17" style="flex:none;position:relative;top:1.5px"><rect x="0.2" y="0.5" width="17.2" height="13" rx="4.5" fill="#6f8d9e"/><path d="M6 12.5 L13.5 12.5 L12.8 17 Z" fill="#6f8d9e"/></svg></span><span style="margin-left:5px">1</span><span style="margin-left:5px;color:#7fb522;font-weight:bold">+1</span></div>
</body></html>
